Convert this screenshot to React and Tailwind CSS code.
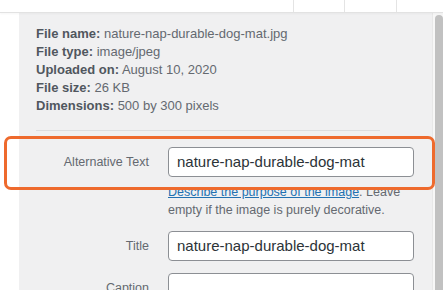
import React from "react";

function Row({ label, value, className = "" }) {
  return (
    <div className={"flex items-center " + className}>
      <div className="w-[113px] shrink-0 text-right text-[12.5px] text-[#646970]">{label}</div>
      <div className="ml-[19px] w-[246px] h-[30px] shrink-0 bg-white border border-[#8c8f94] rounded-[4px] flex items-center px-[8px] text-[15px] text-[#2c3338]">
        {value}
      </div>
    </div>
  );
}

export default function App() {
  const info = [
    ["File name:", "nature-nap-durable-dog-mat.jpg"],
    ["File type:", "image/jpeg"],
    ["Uploaded on:", "August 10, 2020"],
    ["File size:", "26 KB"],
    ["Dimensions:", "500 by 300 pixels"],
  ];
  return (
    <div
      className="relative w-[443px] h-[290px] overflow-hidden bg-white flex flex-col"
      style={{ fontFamily: '"Liberation Sans", Arial, sans-serif' }}
    >
      <div className="h-[13px] shrink-0 bg-white border-b border-[#e2e2e2] shadow-[0_1px_2px_rgba(0,0,0,0.04)] flex justify-end z-10">
        <div className="w-[51px] border-l border-[#e4e4e4]" />
        <div className="w-[52px] border-l border-[#e4e4e4]" />
        <div className="w-[47px] border-l border-[#e4e4e4]" />
      </div>
      <div className="flex-1 flex min-h-0">
        <div className="w-[19px] shrink-0 bg-white" />
        <div className="flex-1 bg-[#f0f0f1] pl-[17px] pt-[12px] min-w-0">
          <div className="text-[13px] leading-[18px] text-[#646970]">
            {info.map(([k, v]) => (
              <div key={k} className="whitespace-nowrap">
                <span className="font-bold text-[#50575e]">{k}</span> {v}
              </div>
            ))}
          </div>
          <div className="mt-[15px] w-[344px] border-t border-[#dcdcde]" />
          <Row label="Alternative Text" value="nature-nap-durable-dog-mat" className="mt-[16px]" />
          <p className="mt-[6px] ml-[132px] w-[246px] text-[12.5px] leading-[18px] text-[#646970]">
            <a href="#" className="text-[#2271b1] underline">Describe the purpose of the image</a>. Leave empty if the image is purely decorative.
          </p>
          <Row label="Title" value="nature-nap-durable-dog-mat" className="mt-[12px]" />
          <Row label="Caption" value="" className="mt-[12px]" />
        </div>
        <div className="w-[11px] shrink-0 bg-[#f7f7f7] border-l border-[#e8e8e8] pl-[2px] pt-[2px] flex flex-col">
          <div className="flex-1 w-[8px] bg-[#c1c1c1] rounded-t-full" />
        </div>
      </div>
      <div className="absolute left-[4px] top-[136px] w-[431px] h-[54px] border-[3px] border-[#ee6a2d] rounded-[7px] pointer-events-none" />
    </div>
  );
}
